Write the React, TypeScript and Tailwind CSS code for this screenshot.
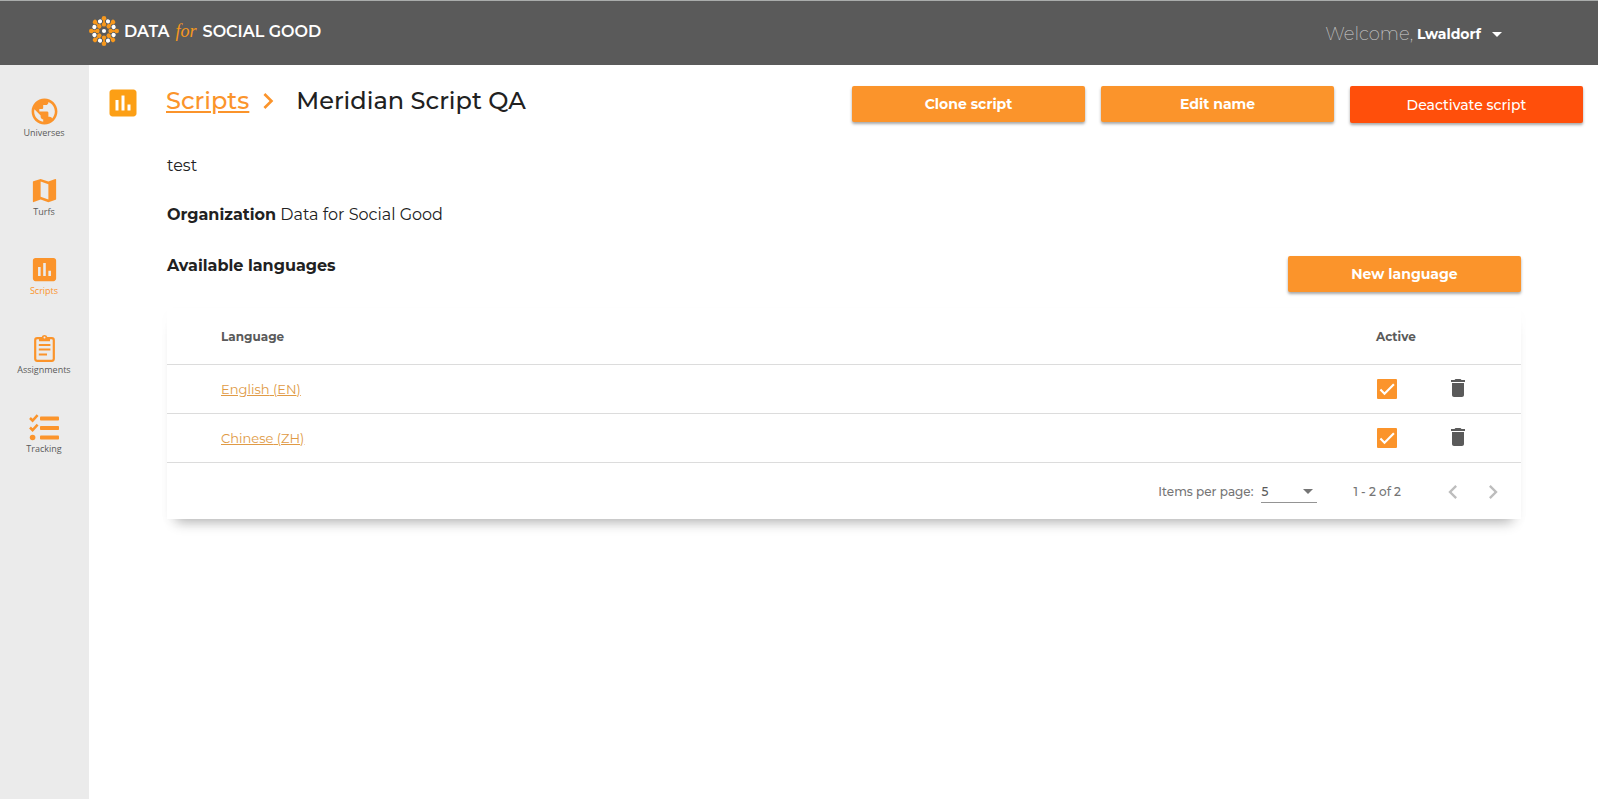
import { useState } from 'react';
import type { ReactNode } from 'react';
import {
  MdArrowDropDown,
  MdAssessment,
  MdChevronLeft,
  MdChevronRight,
  MdDelete,
  MdMap,
  MdPublic,
} from 'react-icons/md';

interface Language {
  code: string;
  name: string;
  active: boolean;
}

interface NavItem {
  label: string;
  icon: ReactNode;
  current?: boolean;
}

const initialLanguages: Language[] = [
  { code: 'EN', name: 'English', active: true },
  { code: 'ZH', name: 'Chinese', active: true },
];

const navItems: NavItem[] = [
  { label: 'Universes', icon: <MdPublic className="size-[31px]" /> },
  { label: 'Turfs', icon: <MdMap className="size-[31px]" /> },
  { label: 'Scripts', icon: <MdAssessment className="size-[31px]" />, current: true },
  { label: 'Assignments', icon: <ClipboardIcon /> },
  { label: 'Tracking', icon: <TasksIcon /> },
];

function ClipboardIcon() {
  return (
    <svg viewBox="0 0 21 28" className="h-7 w-[21px]" fill="none" stroke="currentColor">
      <rect x="1.2" y="4.2" width="18.6" height="22.6" rx="2" strokeWidth="2.2" />
      <path d="M5 3.2h2.6a3 3 0 0 1 5.8 0H16v4H5z" fill="currentColor" stroke="none" />
      <circle cx="10.5" cy="3.6" r="1" fill="#ebebeb" stroke="none" />
      <path d="M4.8 11h11.6M4.8 15.6h11.6M4.8 20.4h8.2" strokeWidth="2" />
    </svg>
  );
}

function TasksIcon() {
  return (
    <svg viewBox="0 0 30 28" className="h-7 w-[30px]" fill="currentColor">
      <rect x="11" y="3.4" width="19" height="4.2" rx="0.8" />
      <rect x="11" y="12.9" width="19" height="4.2" rx="0.8" />
      <rect x="11" y="22.4" width="19" height="4.2" rx="0.8" />
      <path d="M1 5l2.6 2.6L8.6 2.2M1 14.5l2.6 2.6 5-5.4" fill="none" stroke="currentColor" strokeWidth="2.5" />
      <circle cx="3.6" cy="24.5" r="2.8" />
    </svg>
  );
}

function LogoMark() {
  const rays = [0, 45, 90, 135, 180, 225, 270, 315];
  return (
    <svg viewBox="-16 -16 32 32" className="size-8">
      {rays.map((angle) => (
        <g key={angle} transform={`rotate(${angle})`}>
          <path d="M0 -6.5V-13" stroke="#f7981d" strokeWidth="1.8" />
          <circle cy="-6.6" r="2.2" fill="#f7981d" />
          <circle cy="-12.7" r="2.3" fill="#f7981d" />
          <circle cy="-10.4" r="2.1" fill="#fff" transform="rotate(22.5)" />
        </g>
      ))}
      <circle r="2.1" fill="#fff" />
    </svg>
  );
}

function ActionButton({ children }: { children: ReactNode }) {
  return (
    <button className="h-9 w-[233px] rounded-xs bg-[#fb942b] text-sm font-bold text-white shadow-[0_2px_3px_rgba(0,0,0,0.35)]">
      {children}
    </button>
  );
}

export default function App() {
  const [languages, setLanguages] = useState(initialLanguages);

  const toggleLanguage = (code: string) => {
    setLanguages(languages.map((l) => (l.code === code ? { ...l, active: !l.active } : l)));
  };

  const removeLanguage = (code: string) => {
    setLanguages(languages.filter((l) => l.code !== code));
  };

  return (
    <div className="flex min-h-screen flex-col bg-white font-[Montserrat,Inter,sans-serif] text-[#212121]">
      {/* Top bar */}
      <header className="flex h-[65px] items-center justify-between border-t border-[#a9acab] bg-[#5a5a5a] pr-[89px] pl-[88px]">
        <a href="#" className="flex items-center gap-1 pb-1 text-white">
          <LogoMark />
          <span className="flex items-baseline gap-1.5 text-base font-semibold">
            <span>DATA</span>
            <span className="font-['Liberation_Serif',serif] text-lg font-normal text-[#f7981d] italic">for</span>
            <span>SOCIAL GOOD</span>
          </span>
        </a>
        <button className="flex items-center pt-0.5 text-sm font-bold text-white">
          <span className="mr-1 text-lg font-extralight text-[#d0d0d0]">Welcome,</span>
          Lwaldorf
          <MdArrowDropDown className="ml-1 size-6" />
        </button>
      </header>

      <div className="flex flex-1">
        {/* Side navigation */}
        <nav className="flex w-[89px] shrink-0 flex-col gap-7 bg-[#ebebeb] pt-[30px] pr-px font-['Open_Sans',sans-serif]">
          {navItems.map((item) => (
            <a key={item.label} href="#" className="flex h-[51px] flex-col items-center text-[#fb942b]">
              <span className="flex h-8 items-center">{item.icon}</span>
              <span className={item.current ? 'text-[9px] leading-3' : 'text-[9px] leading-3 text-[#5a5a5a]'}>
                {item.label}
              </span>
            </a>
          ))}
        </nav>

        <main className="min-w-0 flex-1">
          {/* Title and actions */}
          <div className="flex items-end justify-between pt-5 pr-[15px] pl-4">
            <div className="flex h-[38px] items-start">
              <MdAssessment className="size-9 text-[#fc9f15]" />
              <h1 className="ml-[25px] flex items-center text-2xl leading-8 font-medium">
                <a href="#" className="text-[#fb942b] underline">
                  Scripts
                </a>
                <MdChevronRight className="mr-3 ml-[3px] size-8 stroke-current text-[#fb942b]" />
                Meridian Script QA
              </h1>
            </div>
            <div className="flex gap-4">
              <ActionButton>Clone script</ActionButton>
              <ActionButton>Edit name</ActionButton>
              <button className="h-[37px] w-[233px] rounded-xs bg-[#ff4f0b] text-sm font-medium text-white shadow-[0_2px_3px_rgba(0,0,0,0.35)]">
                Deactivate script
              </button>
            </div>
          </div>

          {/* Script details */}
          <div className="pt-[31px] pr-[77px] pl-[78px]">
            <p className="text-base leading-6">test</p>
            <p className="mt-[25px] text-base leading-6">
              <strong>Organization</strong> Data for Social Good
            </p>
            <div className="mt-[29px] flex items-start justify-between">
              <h2 className="text-base leading-5 font-bold">Available languages</h2>
              <ActionButton>New language</ActionButton>
            </div>

            {/* Languages table */}
            <section className="mt-4 bg-white shadow-[0_12px_12px_-9px_rgba(0,0,0,0.3),0_4px_12px_rgba(0,0,0,0.02)]">
              <table className="w-full text-left text-[13px]">
                <thead>
                  <tr className="h-14 border-b border-[#dcdcdc] text-xs text-[#5a5a5a]">
                    <th className="pt-0.5 pl-[54px] font-bold">Language</th>
                    <th className="w-[70px] pt-0.5 font-bold">Active</th>
                    <th className="w-[75px]" />
                  </tr>
                </thead>
                <tbody>
                  {languages.map((language) => (
                    <tr key={language.code} className="h-[49px] border-b border-[#dcdcdc]">
                      <td className="pt-0.5 pl-[54px]">
                        <a href="#" className="text-[#e09a45] underline">
                          {language.name} ({language.code})
                        </a>
                      </td>
                      <td>
                        <label className="ml-px grid size-5">
                          <input
                            type="checkbox"
                            aria-label={`${language.name} active`}
                            checked={language.active}
                            onChange={() => toggleLanguage(language.code)}
                            className="size-5 appearance-none rounded-[1px] border-2 border-[#757575] [grid-area:1/1] checked:border-[#fb942b] checked:bg-[#fb942b]"
                          />
                          {language.active && (
                            <svg viewBox="0 0 24 24" className="pointer-events-none size-5 [grid-area:1/1]">
                              <path d="M4.1 12.7L9 17.6 20.3 6.3" fill="none" stroke="#fff" strokeWidth="2.6" />
                            </svg>
                          )}
                        </label>
                      </td>
                      <td className="pb-0.5">
                        <button
                          aria-label={`Delete ${language.name}`}
                          onClick={() => removeLanguage(language.code)}
                          className="block text-[#5a5a5a]"
                        >
                          <MdDelete className="size-6" />
                        </button>
                      </td>
                    </tr>
                  ))}
                </tbody>
              </table>

              {/* Paginator */}
              <div className="flex h-14 items-center justify-end pt-0.5 pr-2 text-xs font-medium text-[#757575]">
                <label htmlFor="page-size">Items per page:</label>
                <div className="ml-2 grid h-[22px] w-14 items-center border-b border-[#949494]">
                  <select id="page-size" className="w-full appearance-none pt-0.5 text-[#5a5a5a] [grid-area:1/1]">
                    <option>5</option>
                    <option>10</option>
                    <option>25</option>
                  </select>
                  <svg viewBox="0 0 10 5" className="pointer-events-none mr-1 h-[5px] w-2.5 justify-self-end [grid-area:1/1]">
                    <path d="M0 0h10L5 5z" fill="currentColor" />
                  </svg>
                </div>
                <span className="mr-8 ml-9">
                  1 - {languages.length} of {languages.length}
                </span>
                <button aria-label="Previous page" disabled className="flex size-10 items-center justify-center text-[#bdbdbd]">
                  <MdChevronLeft className="size-7" />
                </button>
                <button aria-label="Next page" disabled className="flex size-10 items-center justify-center text-[#bdbdbd]">
                  <MdChevronRight className="size-7" />
                </button>
              </div>
            </section>
          </div>
        </main>
      </div>
    </div>
  );
}
